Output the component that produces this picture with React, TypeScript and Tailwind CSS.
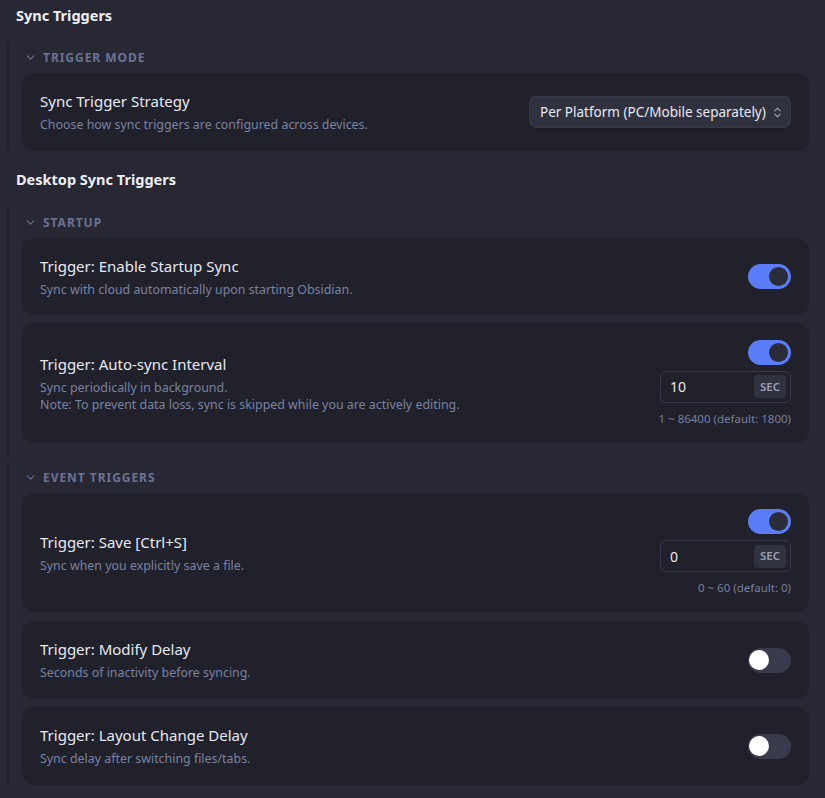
import React from 'react';
import { ChevronDown, ChevronsUpDown } from 'lucide-react';

const font = { fontFamily: '"Noto Sans", "Open Sans", sans-serif' };

const Toggle: React.FC<{ on?: boolean }> = ({ on }) =>
  on ? (
    <div className="w-[43px] h-[25px] rounded-full bg-[#5a7cf6] flex items-center justify-end pr-[3px]">
      <div className="w-[19px] h-[19px] rounded-full bg-[#2a2c3a]" />
    </div>
  ) : (
    <div className="w-[43px] h-[25px] rounded-full bg-[#393b4d] flex items-center pl-[1px]">
      <div className="w-[20px] h-[20px] rounded-full bg-white" />
    </div>
  );

const SecInput: React.FC<{ value: string; hint: string }> = ({ value, hint }) => (
  <>
    <div className="mt-[6px] w-[131px] h-[32px] rounded-md border border-[#363847] flex items-center justify-between pl-[9px] pr-[4px]">
      <span className="text-[14px] text-[#e8e9ef]">{value}</span>
      <span className="h-[23px] w-[32px] rounded bg-[#30323f] text-[11.5px] font-semibold text-[#9a9fb6] flex items-center justify-center">
        SEC
      </span>
    </div>
    <div className="mt-[8px] text-[11.5px] text-[#787f9e] leading-[16px]">{hint}</div>
  </>
);

const Card: React.FC<{
  title: string;
  desc: React.ReactNode;
  right: React.ReactNode;
  className?: string;
}> = ({ title, desc, right, className = '' }) => (
  <div className={`rounded-xl bg-[#20212b] pl-[18px] pr-[18px] flex items-center justify-between ${className}`}>
    <div>
      <div className="text-[15px] text-[#e8e9f0] leading-[20px]">{title}</div>
      <div className="mt-[5px] text-[12.4px] text-[#7a81a1] leading-[17px]">{desc}</div>
    </div>
    <div className="flex flex-col items-end">{right}</div>
  </div>
);

const Group: React.FC<{ label: string; children: React.ReactNode; className?: string }> = ({
  label,
  children,
  className = '',
}) => (
  <div className={`ml-[7px] border-l-2 border-[#20212b] pl-[13px] ${className}`}>
    <div className="h-[31px] flex items-center gap-[6px] pl-[2px]">
      <ChevronDown size={13} strokeWidth={2} className="text-[#6b7190]" />
      <span className="text-[12px] font-bold tracking-[0.08em] text-[#6b7294]">{label}</span>
    </div>
    <div className="flex flex-col gap-[8px]">{children}</div>
  </div>
);

export default function App() {
  return (
    <div className="min-h-screen w-full bg-[#272834] pr-[16px] pb-[13px]" style={font}>
      <h2 className="h-[31px] pl-[16px] flex items-center text-[14.5px] font-bold text-[#eef0f5]">
        Sync Triggers
      </h2>
      <Group label="TRIGGER MODE" className="mt-[11px]">
        <Card
          className="h-[78px]"
          title="Sync Trigger Strategy"
          desc="Choose how sync triggers are configured across devices."
          right={
            <div className="w-[262px] h-[32px] rounded-md bg-[#2f313e] border border-[#353746] shadow-sm flex items-center justify-between pl-[10px] pr-[6px]">
              <span className="text-[13.5px] text-[#e8e9f0]">Per Platform (PC/Mobile separately)</span>
              <ChevronsUpDown size={13} className="text-[#a3a7ba]" />
            </div>
          }
        />
      </Group>

      <h2 className="mt-[14px] h-[30px] pl-[16px] flex items-center text-[14.5px] font-bold text-[#eef0f5]">
        Desktop Sync Triggers
      </h2>
      <Group label="STARTUP" className="mt-[12px] pb-[14px]">
        <Card
          className="h-[77px]"
          title="Trigger: Enable Startup Sync"
          desc="Sync with cloud automatically upon starting Obsidian."
          right={<Toggle on />}
        />
        <Card
          className="h-[120px]"
          title="Trigger: Auto-sync Interval"
          desc={
            <>
              Sync periodically in background.
              <br />
              Note: To prevent data loss, sync is skipped while you are actively editing.
            </>
          }
          right={
            <>
              <Toggle on />
              <SecInput value="10" hint="1 ~ 86400 (default: 1800)" />
            </>
          }
        />
      </Group>

      <Group label="EVENT TRIGGERS" className="mt-[5px]">
        <Card
          className="h-[119px]"
          title="Trigger: Save [Ctrl+S]"
          desc="Sync when you explicitly save a file."
          right={
            <>
              <Toggle on />
              <SecInput value="0" hint="0 ~ 60 (default: 0)" />
            </>
          }
        />
        <Card
          className="h-[78px] mt-[1px]"
          title="Trigger: Modify Delay"
          desc="Seconds of inactivity before syncing."
          right={<Toggle />}
        />
        <Card
          className="h-[78px]"
          title="Trigger: Layout Change Delay"
          desc="Sync delay after switching files/tabs."
          right={<Toggle />}
        />
      </Group>
    </div>
  );
}
